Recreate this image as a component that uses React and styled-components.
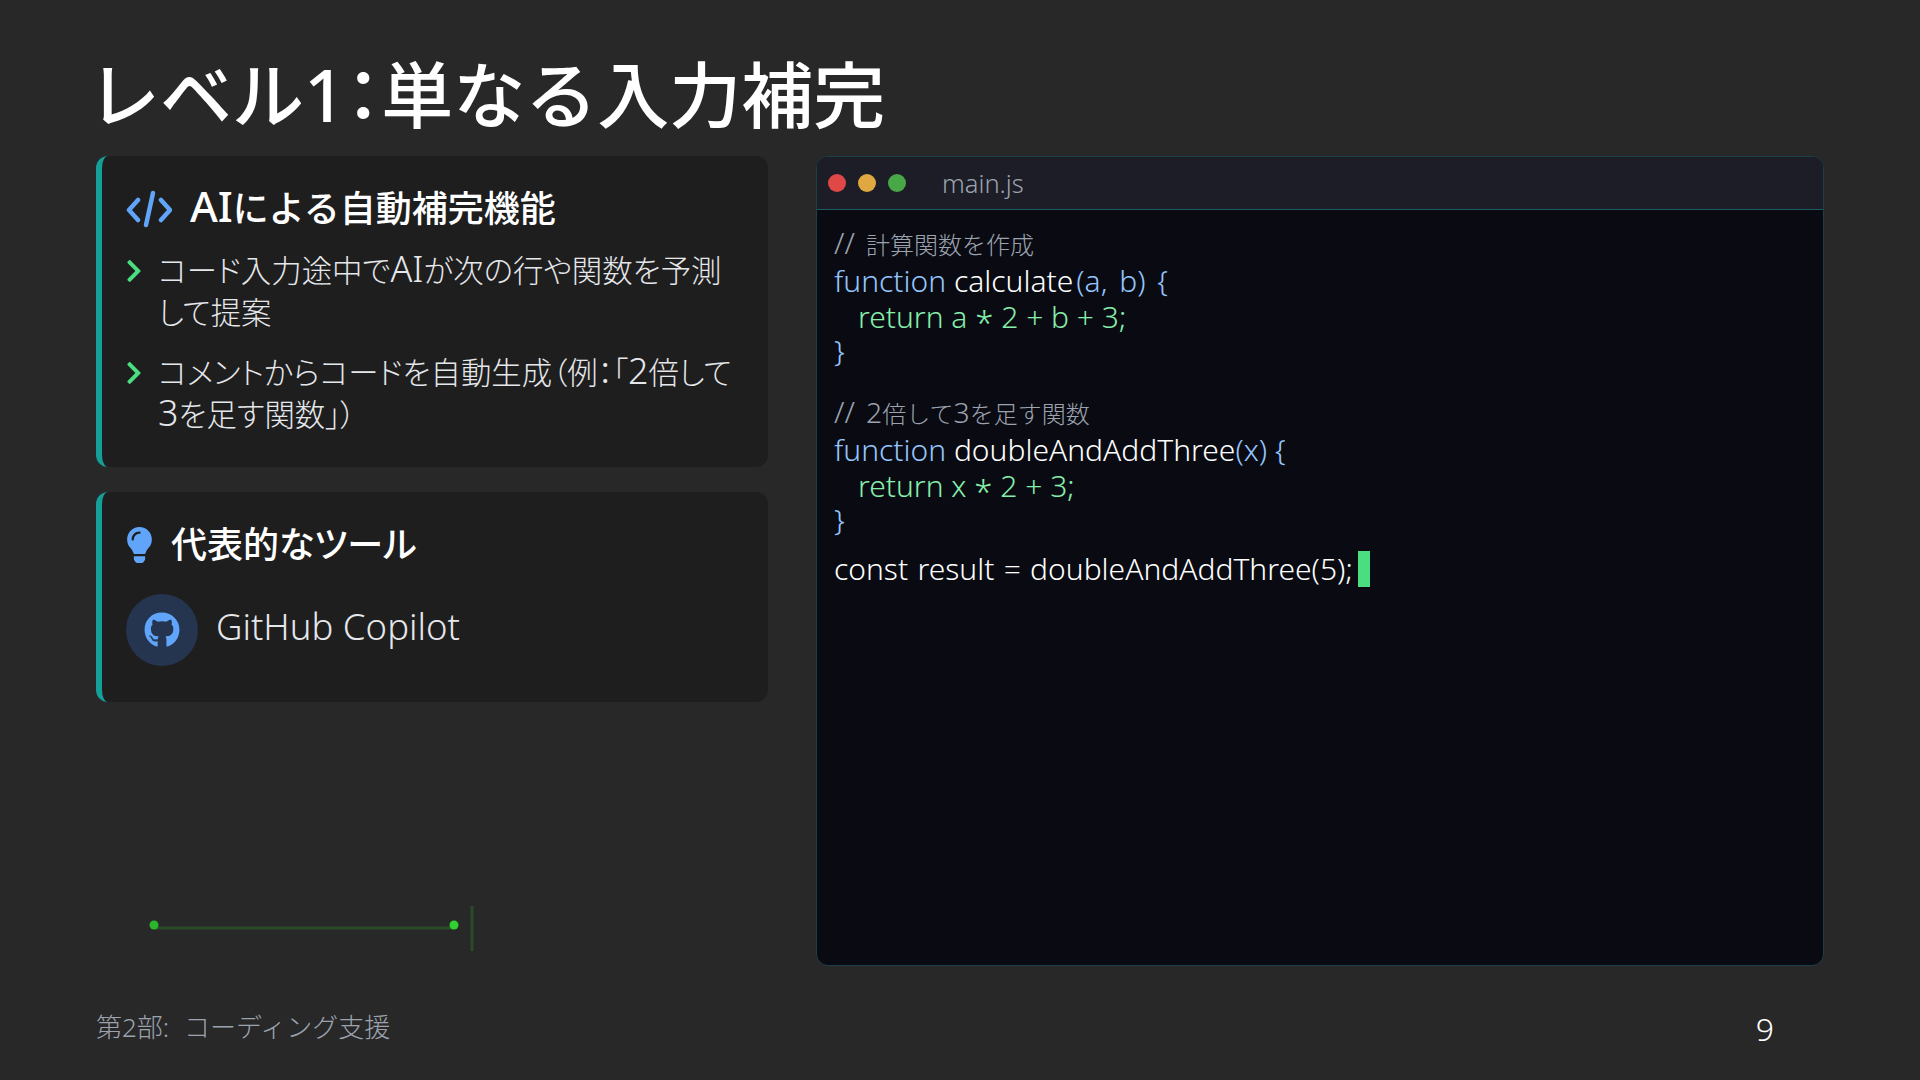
import React from 'react';
import styled, { createGlobalStyle } from 'styled-components';
import { FaLightbulb, FaGithub, FaChevronRight } from 'react-icons/fa';

const GlobalStyle = createGlobalStyle`
  html, body {
    margin: 0;
    padding: 0;
    background: #282828;
  }
  * {
    box-sizing: border-box;
  }
`;

const Slide = styled.div`
  width: 1920px;
  height: 1080px;
  overflow: hidden;
  background: #282828;
  color: #fff;
  font-family: "Noto Sans", "Noto Sans CJK JP", sans-serif;
  padding: 48px 96px 0;
  display: flex;
  flex-direction: column;
`;

const Title = styled.h1`
  margin: 0 0 0 -8px;
  height: 108px;
  font-size: 72px;
  line-height: 92px;
  font-weight: 500;
  color: #fff;
`;

const Punct = styled.span`
  font-feature-settings: "halt";
`;

const Latin = styled.span`
  font-size: ${(p) => p.$scale || 1.18}em;
  line-height: 0;
`;

const Slashes = styled(Latin)`
  margin-right: 5px;
`;

const Columns = styled.div`
  display: grid;
  grid-template-columns: 672px 1008px;
  column-gap: 48px;
  height: 810px;
`;

const LeftColumn = styled.div`
  display: flex;
  flex-direction: column;
  gap: 25px;
`;

const Card = styled.section`
  background: #1e1e1e;
  border-left: 6px solid #14a098;
  border-radius: 12px;
  padding: ${(p) => p.$pad};
  height: ${(p) => p.$height}px;
`;

const CardHeading = styled.h2`
  margin: 0 0 ${(p) => p.$below}px;
  display: flex;
  align-items: center;
  gap: ${(p) => p.$gap}px;
  font-size: 36px;
  line-height: 54px;
  font-weight: 500;
  color: #fff;
  font-feature-settings: ${(p) => (p.$tight ? '"palt"' : 'normal')};

  svg {
    color: #60a5fa;
    flex: none;
  }
`;

const BulbIcon = styled(FaLightbulb)`
  width: 27px;
  height: 36px;
`;

const BulletList = styled.ul`
  margin: 0;
  padding: 0;
  list-style: none;
  display: flex;
  flex-direction: column;
  gap: 18px;
`;

const Bullet = styled.li`
  display: flex;
  gap: 16px;
  font-size: 30.4px;
  line-height: 42px;
  color: #e5e7eb;
  font-weight: 300;
  font-feature-settings: "palt";

  svg {
    color: #4ade80;
    flex: none;
    width: 16px;
    height: 26px;
    margin-top: 8px;
  }
`;

const BulletText = styled.span`
  max-width: 578px;
`;

const ToolRow = styled.div`
  display: flex;
  align-items: center;
  gap: 18px;
`;

const ToolBadge = styled.div`
  width: 72px;
  height: 72px;
  border-radius: 50%;
  background: #253550;
  color: #60a5fa;
  display: flex;
  align-items: center;
  justify-content: center;
`;

const ToolName = styled.span`
  font-size: 36.5px;
  line-height: 54px;
  font-weight: 300;
  color: #e5e7eb;
  margin-top: -8px;
`;

const Connector = styled.svg`
  display: block;
  margin: 178px 0 0 48px;
`;

const CodeWindow = styled.section`
  background: #0a0b12;
  border: 1px solid #1d4048;
  border-radius: 12px;
  overflow: hidden;
  display: flex;
  flex-direction: column;
`;

const WindowBar = styled.div`
  height: 53px;
  background: #1c1d26;
  border-bottom: 1px solid #1b5c60;
  padding: 0 11px;
  display: flex;
  align-items: center;
  gap: 12px;
`;

const Dot = styled.span`
  width: 18px;
  height: 18px;
  border-radius: 50%;
  background: ${(p) => p.$color};
`;

const FileName = styled.span`
  margin-left: 24px;
  font-size: 25.5px;
  font-weight: 300;
  color: #9ca3af;
`;

const CodeBody = styled.div`
  padding: 17px;
  font-size: 30px;
  line-height: 36px;
  font-weight: 300;
  color: #fff;
`;

const CodeBlock = styled.div`
  margin-bottom: ${(p) => p.$below}px;
`;

const Line = styled.div`
  white-space: pre;
  display: flex;
  align-items: center;
  height: ${(p) => p.$height || 36}px;
  padding-left: ${(p) => p.$indent || 0}px;
  word-spacing: ${(p) => p.$wordGap || 0}px;
`;

const Comment = styled.span`
  font-size: 24px;
  color: #9ca3af;
`;

const Keyword = styled.span`
  color: #93c5fd;
`;

const Params = styled(Keyword)`
  margin-left: ${(p) => (p.$wide ? 3 : 0)}px;
  word-spacing: ${(p) => (p.$wide ? 4 : 0)}px;
`;

const Green = styled.span`
  color: #86efac;
`;

const Star = styled.span`
  font-size: 1.1em;
  line-height: 0;
  vertical-align: -0.2em;
`;

const Cursor = styled.span`
  display: inline-block;
  width: 12px;
  height: 36px;
  margin-left: 5px;
  background: #4ade80;
`;

const Footer = styled.footer`
  display: flex;
  justify-content: space-between;
  align-items: center;
  padding: 35px 50px 0 0;
`;

const FooterLabel = styled.span`
  font-size: 26px;
  font-weight: 300;
  word-spacing: 8px;
  color: #9ca3af;
`;

const PageNumber = styled.span`
  font-size: 32px;
  font-weight: 300;
  padding-top: 6px;
  color: #fff;
`;

function CodeIcon() {
  return (
    <svg width="46" height="38" viewBox="0 0 46 38" fill="none" stroke="currentColor" strokeWidth="4.5" strokeLinecap="round" strokeLinejoin="round">
      <path d="M12 10 3 20l9 10" />
      <path d="M27 3 20 35" />
      <path d="M35 10l9 10-9 10" />
    </svg>
  );
}

export default function App() {
  return (
    <Slide>
      <GlobalStyle />
      <Title>レベル1<Punct>：</Punct>単なる入力補完</Title>
      <Columns>
        <LeftColumn>
          <Card $pad="26px 24px" $height={311}>
            <CardHeading $gap={18} $below={14}>
              <CodeIcon />
              <span><Latin>AI</Latin>による自動補完機能</span>
            </CardHeading>
            <BulletList>
              <Bullet>
                <FaChevronRight />
                <BulletText>コード入力途中で<Latin>AI</Latin>が次の行や関数を予測して提案</BulletText>
              </Bullet>
              <Bullet>
                <FaChevronRight />
                <BulletText>コメントからコードを自動生成（例：「<Latin>2</Latin>倍して<Latin>3</Latin>を足す関数」）</BulletText>
              </Bullet>
            </BulletList>
          </Card>
          <Card $pad="26px 24px" $height={210}>
            <CardHeading $gap={18} $below={22} $tight>
              <BulbIcon />
              代表的なツール
            </CardHeading>
            <ToolRow>
              <ToolBadge>
                <FaGithub size={36} />
              </ToolBadge>
              <ToolName>GitHub Copilot</ToolName>
            </ToolRow>
          </Card>
          <Connector width="340" height="50" viewBox="0 0 340 50">
            <path d="M10 23H310" stroke="#2a4a2a" strokeWidth="3" fill="none" />
            <path d="M328 1V46" stroke="#2a4a2a" strokeWidth="3" fill="none" />
            <circle cx="10" cy="20" r="4.5" fill="#2ab52a" />
            <circle cx="310" cy="20" r="4.5" fill="#2fd02f" />
          </Connector>
        </LeftColumn>
        <CodeWindow>
          <WindowBar>
            <Dot $color="#e04848" />
            <Dot $color="#e0a840" />
            <Dot $color="#48a848" />
            <FileName>main.js</FileName>
          </WindowBar>
          <CodeBody>
            <CodeBlock $below={29}>
              <Line><Comment><Slashes $scale={1.25}>//</Slashes> 計算関数を作成</Comment></Line>
              <Line><Keyword>function </Keyword>calculate<Params $wide>(a, b) {'{'}</Params></Line>
              <Line $indent={24}><Green>return a <Star>*</Star> 2 + b + 3;</Green></Line>
              <Line $height={32}><Keyword>{'}'}</Keyword></Line>
            </CodeBlock>
            <CodeBlock $below={15}>
              <Line><Comment><Slashes $scale={1.25}>//</Slashes> <Latin>2</Latin>倍して<Latin>3</Latin>を足す関数</Comment></Line>
              <Line><Keyword>function </Keyword>doubleAndAddThree<Params>(x) {'{'}</Params></Line>
              <Line $indent={24}><Green>return x <Star>*</Star> 2 + 3;</Green></Line>
              <Line $height={32}><Keyword>{'}'}</Keyword></Line>
            </CodeBlock>
            <Line $wordGap={1.5}>const result = doubleAndAddThree(5);<Cursor /></Line>
          </CodeBody>
        </CodeWindow>
      </Columns>
      <Footer>
        <FooterLabel>第2部: コーディング支援</FooterLabel>
        <PageNumber>9</PageNumber>
      </Footer>
    </Slide>
  );
}
